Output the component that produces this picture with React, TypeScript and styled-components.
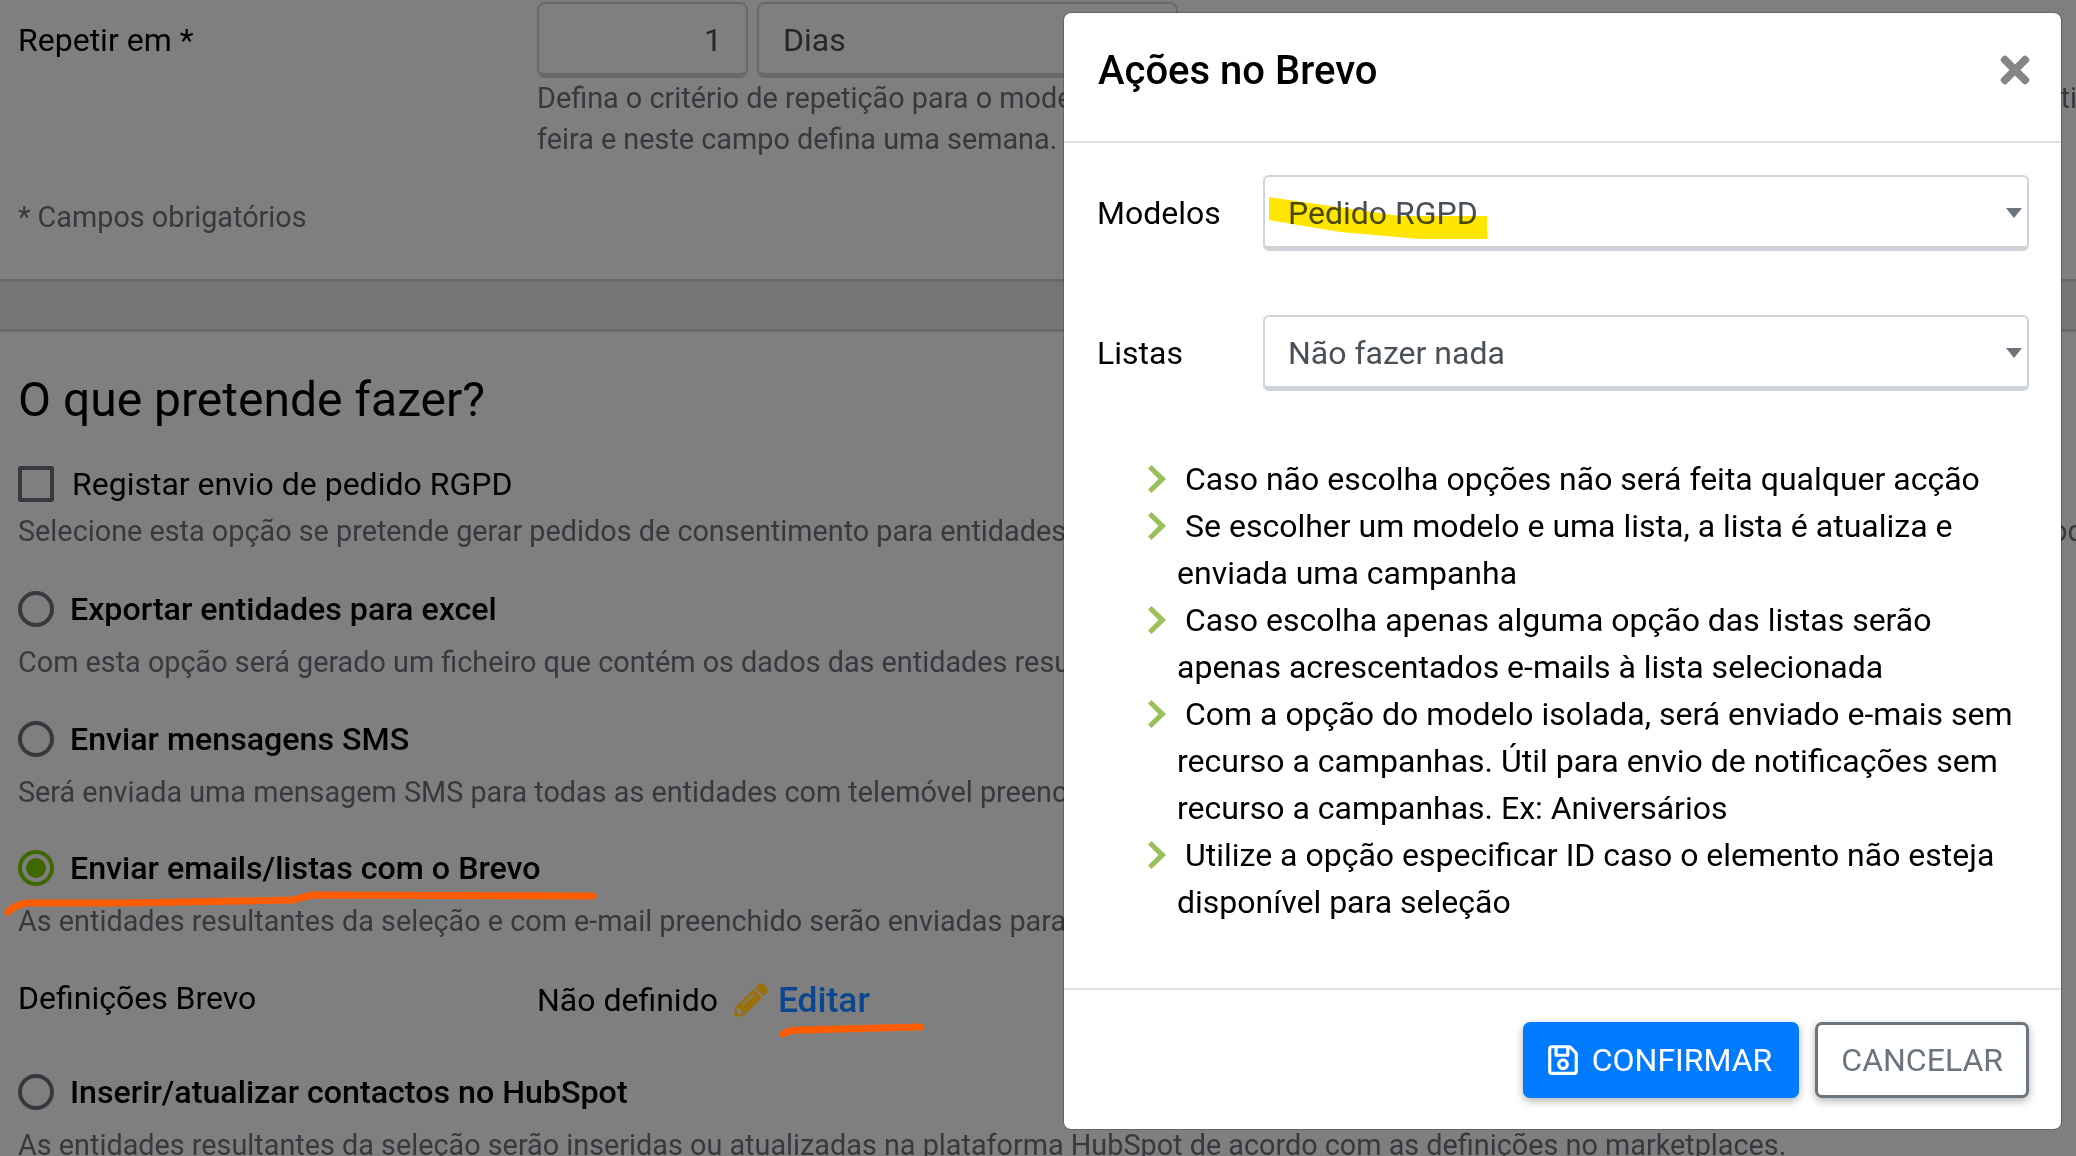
import styled, { createGlobalStyle } from "styled-components";
import { FaPencilAlt, FaRegSave, FaTimes } from "react-icons/fa";

const GlobalStyle = createGlobalStyle`
  html, body {
    margin: 0;
    padding: 0;
    width: 2076px;
    height: 1156px;
    overflow: hidden;
    background: #fff;
    font-family: Roboto, "Liberation Sans", sans-serif;
    color: #000;
  }
  * { box-sizing: border-box; }
`;

const Page = styled.div`
  position: relative;
  width: 2076px;
  height: 1156px;
  overflow: hidden;
`;

const Content = styled.div`
  display: flex;
  flex-direction: column;
  padding-top: 2px;
  white-space: nowrap;
`;

const Section = styled.div`
  padding-left: 18px;
`;

const FormRow = styled.div`
  display: grid;
  grid-template-columns: 519px 1fr;
  font-size: 32px;
`;

const Label = styled.div`
  font-size: 32px;
  line-height: 76px;
`;

const Inputs = styled.div`
  display: flex;
  gap: 9px;
`;

const Field = styled.div<{ $width: number; $right?: boolean }>`
  width: ${(p) => p.$width}px;
  height: 76px;
  padding: 0 24px;
  border: 2px solid #ced4da;
  border-bottom-width: 5px;
  border-radius: 8px;
  color: #495057;
  font-size: 32px;
  line-height: 72px;
  text-align: ${(p) => (p.$right ? "right" : "left")};
`;

const Help = styled.div<{ $top?: number }>`
  margin-top: ${(p) => p.$top || 0}px;
  color: #6c757d;
  font-size: 28.8px;
  line-height: 41px;
`;

const Band = styled.div`
  height: 53px;
  margin-top: 41px;
  background: #e9ecef;
  border-top: 3px solid #ced4da;
  border-bottom: 3px solid #ced4da;
`;

const Heading = styled.h2`
  margin: 37px 0 0;
  font-size: 48px;
  font-weight: 400;
  line-height: 62px;
`;

const OptionRow = styled.div<{ $top: number }>`
  display: flex;
  align-items: center;
  height: 36px;
  margin-top: ${(p) => p.$top}px;
`;

const Checkbox = styled.span`
  width: 36px;
  height: 36px;
  border: 4px solid #6c757d;
  border-radius: 3px;
  margin-right: 18px;
  flex: none;
`;

const Radio = styled.span<{ $on?: boolean }>`
  display: flex;
  align-items: center;
  justify-content: center;
  width: 36px;
  height: 36px;
  border: 4px solid ${(p) => (p.$on ? "#7ed000" : "#6c757d")};
  border-radius: 50%;
  margin-right: 16px;
  flex: none;
  &::after {
    content: "";
    display: ${(p) => (p.$on ? "block" : "none")};
    width: 20px;
    height: 20px;
    border-radius: 50%;
    background: #7ed000;
  }
`;

const OptionTitle = styled.span<{ $bold?: boolean }>`
  font-size: ${(p) => (p.$bold ? 32.2 : 32)}px;
  font-weight: ${(p) => (p.$bold ? 500 : 400)};
`;

const Definition = styled.div`
  display: grid;
  grid-template-columns: 519px 1fr;
  align-items: center;
  margin-top: 30px;
  height: 52px;
  font-size: 32px;
`;

const Value = styled.div`
  display: flex;
  align-items: center;
  padding-top: 4px;
`;

// these two read brighter than the dimmed page, so they sit above the backdrop
const EditIcon = styled(FaPencilAlt)`
  position: relative;
  z-index: 1;
  margin-left: 16px;
  margin-right: 10px;
  color: #9a6f08;
  font-size: 34px;
`;

const EditLink = styled.span`
  position: relative;
  z-index: 1;
  color: #0a4790;
  font-weight: 500;
  font-size: 35.4px;
`;

const Backdrop = styled.div`
  position: absolute;
  inset: 0;
  background: rgba(0, 0, 0, 0.5);
`;

const Modal = styled.div`
  position: absolute;
  z-index: 2;
  left: 1063px;
  top: 12px;
  width: 999px;
  height: 1118px;
  display: flex;
  flex-direction: column;
  background: #fff;
  background-clip: padding-box;
  border: 1px solid rgba(0, 0, 0, 0.2);
  border-radius: 8px;
`;

const ModalHeader = styled.div`
  display: flex;
  align-items: center;
  justify-content: space-between;
  height: 130px;
  padding: 0 25px 14px 34px;
  border-bottom: 2px solid #dee2e6;
`;

const ModalTitle = styled.h4`
  margin: 0;
  font-size: 40px;
  font-weight: 500;
`;

const CloseIcon = styled(FaTimes)`
  color: #858585;
  font-size: 42px;
`;

const ModalBody = styled.div`
  flex: 1;
  padding: 32px 32px 0 33px;
`;

const SelectRow = styled.div`
  display: grid;
  grid-template-columns: 166px 1fr;
  align-items: center;
  margin-bottom: 64px;
`;

const SelectLabel = styled.label`
  font-size: 32px;
`;

const SelectBox = styled.div`
  position: relative;
  height: 76px;
  padding-left: 23px;
  border: 2px solid #ced4da;
  border-bottom-width: 5px;
  border-radius: 6px;
  color: #495057;
  font-size: 32px;
  line-height: 72px;
  &::after {
    content: "";
    position: absolute;
    right: 5px;
    top: 31px;
    border-left: 8px solid transparent;
    border-right: 8px solid transparent;
    border-top: 10px solid #6c757d;
  }
`;

const Notes = styled.ul`
  margin: 0;
  padding: 1px 0 0 80px;
  list-style: none;
`;

const Note = styled.li`
  font-size: 32px;
  line-height: 47px;
`;

const Chevron = styled.svg`
  display: inline-block;
  width: 20px;
  height: 28px;
  margin-left: -30px;
  margin-right: 18px;
  vertical-align: -3px;
`;

const ModalFooter = styled.div`
  display: flex;
  justify-content: flex-end;
  gap: 16px;
  height: 141px;
  padding: 32px 32px 0 0;
  border-top: 2px solid #dee2e6;
`;

const Button = styled.div<{ $primary?: boolean }>`
  display: flex;
  align-items: center;
  gap: 12px;
  height: 76px;
  padding: ${(p) => (p.$primary ? "0 27px 0 23px" : "0 23px")};
  border-radius: 7px;
  font-size: 32px;
  color: ${(p) => (p.$primary ? "#fff" : "#6c757d")};
  background: ${(p) => (p.$primary ? "#007bff" : "#fff")};
  border: ${(p) => (p.$primary ? "none" : "3px solid #6c757d")};
  box-shadow: 0 3px 8px rgba(0, 0, 0, 0.3);
`;

const Annotations = styled.svg<{ $multiply?: boolean }>`
  position: absolute;
  z-index: 3;
  left: 0;
  top: 0;
  pointer-events: none;
  mix-blend-mode: ${(p) => (p.$multiply ? "multiply" : "normal")};
`;

const notes = [
  "Caso não escolha opções não será feita qualquer acção",
  "Se escolher um modelo e uma lista, a lista é atualiza e enviada uma campanha",
  "Caso escolha apenas alguma opção das listas serão apenas acrescentados e-mails à lista selecionada",
  "Com a opção do modelo isolada, será enviado e-mais sem recurso a campanhas. Útil para envio de notificações sem recurso a campanhas. Ex: Aniversários",
  "Utilize a opção especificar ID caso o elemento não esteja disponível para seleção",
];

export default function App() {
  return (
    <Page>
      <GlobalStyle />
      <Content>
        <Section>
          <FormRow>
            <Label>Repetir em *</Label>
            <div>
              <Inputs>
                <Field $width={211} $right>1</Field>
                <Field $width={421}>Dias</Field>
              </Inputs>
              <Help>Defina o critério de repetição para o modelo selecionado. Por exemplo escolha a opção Dias indique o dia certo da repetição semanal</Help>
              <Help>feira e neste campo defina uma semana.</Help>
            </div>
          </FormRow>
          <Help $top={37}>* Campos obrigatórios</Help>
        </Section>
        <Band />
        <Section>
          <Heading>O que pretende fazer?</Heading>
          <OptionRow $top={35}>
            <Checkbox />
            <OptionTitle>Registar envio de pedido RGPD</OptionTitle>
          </OptionRow>
          <Help $top={9}>Selecione esta opção se pretende gerar pedidos de consentimento para entidades que ainda não deram o seu consentimento, e ainda não foram contactadas, todas as vezes</Help>
          <OptionRow $top={39}>
            <Radio />
            <OptionTitle $bold>Exportar entidades para excel</OptionTitle>
          </OptionRow>
          <Help $top={15}>Com esta opção será gerado um ficheiro que contém os dados das entidades resultantes da seleção</Help>
          <OptionRow $top={38}>
            <Radio />
            <OptionTitle $bold>Enviar mensagens SMS</OptionTitle>
          </OptionRow>
          <Help $top={15}>Será enviada uma mensagem SMS para todas as entidades com telemóvel preenchido</Help>
          <OptionRow $top={37}>
            <Radio $on />
            <OptionTitle $bold>Enviar emails/listas com o Brevo</OptionTitle>
          </OptionRow>
          <Help $top={15}>As entidades resultantes da seleção e com e-mail preenchido serão enviadas para o Brevo</Help>
          <Definition>
            <span>Definições Brevo</span>
            <Value>
              Não definido
              <EditIcon />
              <EditLink>Editar</EditLink>
            </Value>
          </Definition>
          <OptionRow $top={50}>
            <Radio />
            <OptionTitle $bold>Inserir/atualizar contactos no HubSpot</OptionTitle>
          </OptionRow>
          <Help $top={15}>As entidades resultantes da seleção serão inseridas ou atualizadas na plataforma HubSpot de acordo com as definições no marketplaces.</Help>
        </Section>
      </Content>
      <Backdrop />
      <Modal>
        <ModalHeader>
          <ModalTitle>Ações no Brevo</ModalTitle>
          <CloseIcon />
        </ModalHeader>
        <ModalBody>
          <SelectRow>
            <SelectLabel>Modelos</SelectLabel>
            <SelectBox>Pedido RGPD</SelectBox>
          </SelectRow>
          <SelectRow>
            <SelectLabel>Listas</SelectLabel>
            <SelectBox>Não fazer nada</SelectBox>
          </SelectRow>
          <Notes>
            {notes.map((text) => (
              <Note key={text}>
                <Chevron viewBox="0 0 20 28">
                  <path d="M1 3.5 4.5 0 19 14 4.500 28 1 24.500 11.500 14z" fill="#9ac05a" />
                </Chevron>
                {text}
              </Note>
            ))}
          </Notes>
        </ModalBody>
        <ModalFooter>
          <Button $primary>
            <FaRegSave size={34} />
            CONFIRMAR
          </Button>
          <Button>CANCELAR</Button>
        </ModalFooter>
      </Modal>
      <Annotations $multiply width={2076} height={1156} viewBox="0 0 2076 1156">
        <path
          d="M1269 197 L1400 216 L1487 216 L1487 239 L1420 239 L1340 232 L1269 220 Z"
          fill="#ffe600"
        />
      </Annotations>
      <Annotations width={2076} height={1156} viewBox="0 0 2076 1156">
        <path
          d="M8 912 Q14 905 28 903 L119 903 L293 900 L312 895 L593 896"
          fill="none"
          stroke="#ff5b00"
          strokeWidth={7}
          strokeLinecap="round"
        />
        <path
          d="M783 1034 Q790 1030 800 1030 L920 1027"
          fill="none"
          stroke="#ff5b00"
          strokeWidth={7}
          strokeLinecap="round"
        />
      </Annotations>
    </Page>
  );
}
